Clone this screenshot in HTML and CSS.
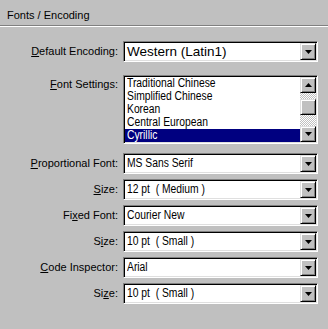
FILE: index.html
```html
<!DOCTYPE html>
<html>
<head>
<meta charset="utf-8">
<link rel="stylesheet" href="styles.css">
</head>
<body>
<div class="panel">
  <div class="title">Fonts / Encoding</div>
  <div class="rule"></div>
  <div class="form">
    <div class="row gap-lg">
      <label class="lbl"><u>D</u>efault Encoding:</label>
      <div class="combo"><span class="val"><span class="tx tx-wide">Western (Latin1)</span></span><span class="btn"><svg width="7" height="4" viewBox="0 0 7 4"><polygon points="0,0 7,0 3.5,4" fill="#000"/></svg></span></div>
    </div>
    <div class="row row-top gap-md">
      <label class="lbl lbl-top"><u>F</u>ont Settings:</label>
      <div class="listbox">
        <ul class="items">
          <li><span class="tx">Traditional Chinese</span></li>
          <li><span class="tx">Simplified Chinese</span></li>
          <li><span class="tx">Korean</span></li>
          <li><span class="tx">Central European</span></li>
          <li class="sel"><span class="tx">Cyrillic</span></li>
        </ul>
        <div class="vscroll">
          <span class="btn sbtn"><svg width="7" height="4" viewBox="0 0 7 4"><polygon points="0,4 7,4 3.5,0" fill="#000"/></svg></span>
          <span class="track t1"></span>
          <span class="thumb"></span>
          <span class="track t2"></span>
          <span class="btn sbtn"><svg width="7" height="4" viewBox="0 0 7 4"><polygon points="0,0 7,0 3.5,4" fill="#000"/></svg></span>
        </div>
      </div>
    </div>
    <div class="row">
      <label class="lbl"><u>P</u>roportional Font:</label>
      <div class="combo"><span class="val"><span class="tx">MS Sans Serif</span></span><span class="btn"><svg width="7" height="4" viewBox="0 0 7 4"><polygon points="0,0 7,0 3.5,4" fill="#000"/></svg></span></div>
    </div>
    <div class="row">
      <label class="lbl"><u>S</u>ize:</label>
      <div class="combo"><span class="val"><span class="tx">12 pt&nbsp; ( Medium )</span></span><span class="btn"><svg width="7" height="4" viewBox="0 0 7 4"><polygon points="0,0 7,0 3.5,4" fill="#000"/></svg></span></div>
    </div>
    <div class="row">
      <label class="lbl">Fi<u>x</u>ed Font:</label>
      <div class="combo"><span class="val"><span class="tx">Courier New</span></span><span class="btn"><svg width="7" height="4" viewBox="0 0 7 4"><polygon points="0,0 7,0 3.5,4" fill="#000"/></svg></span></div>
    </div>
    <div class="row">
      <label class="lbl">S<u>i</u>ze:</label>
      <div class="combo"><span class="val"><span class="tx">10 pt&nbsp; ( Small )</span></span><span class="btn"><svg width="7" height="4" viewBox="0 0 7 4"><polygon points="0,0 7,0 3.5,4" fill="#000"/></svg></span></div>
    </div>
    <div class="row">
      <label class="lbl"><u>C</u>ode Inspector:</label>
      <div class="combo"><span class="val"><span class="tx">Arial</span></span><span class="btn"><svg width="7" height="4" viewBox="0 0 7 4"><polygon points="0,0 7,0 3.5,4" fill="#000"/></svg></span></div>
    </div>
    <div class="row">
      <label class="lbl">Si<u>z</u>e:</label>
      <div class="combo"><span class="val"><span class="tx">10 pt&nbsp; ( Small )</span></span><span class="btn"><svg width="7" height="4" viewBox="0 0 7 4"><polygon points="0,0 7,0 3.5,4" fill="#000"/></svg></span></div>
    </div>
  </div>
</div>
</body>
</html>
```
FILE: styles.css
```css
html, body {
  margin: 0;
  padding: 0;
  background: #c0c0c0;
}
body {
  font-family: "Liberation Sans", Arial, sans-serif;
  color: #000;
  width: 328px;
  height: 329px;
  overflow: hidden;
}
.title {
  font-size: 11px;
  line-height: 13px;
  padding: 9px 0 3px 7px;
}
.rule {
  height: 0;
  border-top: 1px solid #808080;
  border-bottom: 1px solid #ffffff;
}
.form {
  padding-top: 14px;
  display: flex;
  flex-direction: column;
}
.row {
  display: flex;
  align-items: center;
  gap: 5px;
  margin-bottom: 5px;
}
.row-top {
  align-items: flex-start;
}
.gap-lg { margin-bottom: 13px; }
.gap-md { margin-bottom: 9px; }
.lbl {
  width: 118px;
  text-align: right;
  font-size: 11px;
  line-height: 13px;
  white-space: nowrap;
}
.lbl-top {
  padding-top: 3px;
}
.combo, .listbox {
  box-sizing: border-box;
  width: 195px;
  background: #fff;
  border: 1px solid;
  border-color: #808080 #ffffff #ffffff #808080;
  box-shadow: inset 1px 1px #000, inset -1px -1px #dfdfdf;
  padding: 1px;
  display: flex;
}
.combo {
  height: 21px;
  align-items: center;
}
.val {
  flex: 1;
  padding-left: 2px;
  font-size: 12px;
  line-height: 17px;
  white-space: nowrap;
  overflow: hidden;
}
.tx {
  display: inline-block;
  transform: scaleX(0.86);
  transform-origin: 0 50%;
  white-space: nowrap;
}
.tx-wide {
  font-size: 13.5px;
  transform: none;
}
.btn {
  box-sizing: border-box;
  width: 16px;
  height: 17px;
  flex: none;
  background: #c0c0c0;
  border: 1px solid;
  border-color: #dfdfdf #000 #000 #dfdfdf;
  box-shadow: inset 1px 1px #fff, inset -1px -1px #808080;
  display: flex;
  align-items: center;
  justify-content: center;
}
.btn svg { display: block; }
.listbox {
  height: 69px;
}
.items {
  flex: 1;
  list-style: none;
  margin: 0;
  padding: 0;
  font-size: 12px;
}
.items li {
  height: 13px;
  line-height: 13px;
  padding-left: 2px;
  white-space: nowrap;
  overflow: hidden;
}
.items li.sel {
  background: #000080;
  color: #fff;
}
.vscroll {
  width: 16px;
  display: flex;
  flex-direction: column;
}
.sbtn {
  height: 16px;
}
.track {
  background: repeating-conic-gradient(#ffffff 0 25%, #c0c0c0 0 50%) 0 0 / 2px 2px;
}
.t1 { height: 6px; }
.t2 { flex: 1; }
.thumb {
  box-sizing: border-box;
  height: 16px;
  background: #c0c0c0;
  border: 1px solid;
  border-color: #dfdfdf #000 #000 #dfdfdf;
  box-shadow: inset 1px 1px #fff, inset -1px -1px #808080;
}
```
